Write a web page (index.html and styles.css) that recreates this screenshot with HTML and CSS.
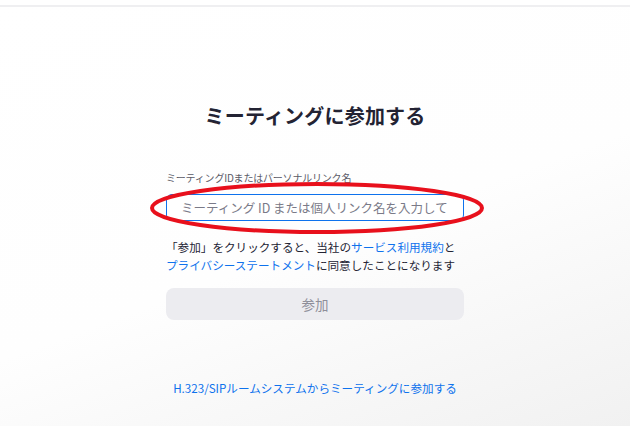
FILE: index.html
```html
<!DOCTYPE html>
<html lang="ja">
  <head>
    <meta charset="UTF-8" />
    <title>ミーティングに参加する</title>
    <link rel="stylesheet" href="styles.css">
  </head>
  <body>
    <div class="topbar"></div>

    <div class="page">
      <div class="join">
        <h1>ミーティングに参加する</h1>

        <label class="field-label" for="meetingId">ミーティングIDまたはパーソナルリンク名</label>
        <div class="field">
          <input id="meetingId" class="field-input" type="text" placeholder="ミーティング ID または個人リンク名を入力して" />
          <!-- red annotation ring drawn over the input -->
          <svg class="ring" width="340" height="56" viewBox="0 0 340 56">
            <ellipse cx="168" cy="28" rx="165" ry="24" fill="none" stroke="#e8101c" stroke-width="4" />
          </svg>
        </div>

        <p class="terms">
          「参加」をクリックすると、当社の<a href="#">サービス利用規約</a>と<br>
          <a href="#">プライバシーステートメント</a>に同意したことになります
        </p>

        <button class="join-btn" type="button" disabled>参加</button>

        <a class="sip-link" href="#">H.323/SIPルームシステムからミーティングに参加する</a>
      </div>
    </div>
  </body>
</html>
```

FILE: styles.css
```css
html, body {
  margin: 0;
  padding: 0;
  height: 100%;
}

body {
  font-family: "Noto Sans CJK JP", "Noto Sans", sans-serif;
  color: #232333;
  background: linear-gradient(160deg, #ffffff 0%, #fefefe 55%, #f1f1f1 100%);
  overflow: hidden;
}

.topbar {
  height: 5px;
  background: #ffffff;
  border-bottom: 2px solid #efeff1;
}

.page {
  display: flex;
  justify-content: center;
}

.join {
  width: 298px;
  display: flex;
  flex-direction: column;
  padding-top: 94px;
}

h1 {
  margin: 0;
  font-size: 20px;
  line-height: 30px;
  font-weight: 700;
  text-align: center;
  color: #232333;
  letter-spacing: 0.2px;
}

.field-label {
  margin-top: 40px;
  font-size: 10px;
  line-height: 14px;
  color: #5a5a66;
  letter-spacing: -0.2px;
}

.field {
  position: relative;
  margin-top: 9px;
}

.field-input {
  box-sizing: border-box;
  width: 100%;
  height: 27px;
  padding: 0 14px;
  border: 1.5px solid #0e72ed;
  border-radius: 6px;
  background: #ffffff;
  font-family: inherit;
  font-size: 12.5px;
  color: #232333;
  outline: none;
}

.field-input::placeholder {
  color: #7a7a88;
}

.ring {
  position: absolute;
  left: -17px;
  top: -14px;
  pointer-events: none;
}

.terms {
  margin: 17px 0 0;
  font-size: 11.6px;
  line-height: 18px;
  color: #232333;
  white-space: nowrap;
}

.terms a,
.sip-link {
  color: #0e72ed;
  text-decoration: none;
}

.join-btn {
  margin-top: 14px;
  height: 32px;
  border: none;
  border-radius: 8px;
  background: #ececf0;
  color: #8e8e99;
  font-family: inherit;
  font-size: 13.5px;
}

.sip-link {
  margin-top: 59px;
  font-size: 11.6px;
  line-height: 18px;
  text-align: center;
  white-space: nowrap;
}
```
